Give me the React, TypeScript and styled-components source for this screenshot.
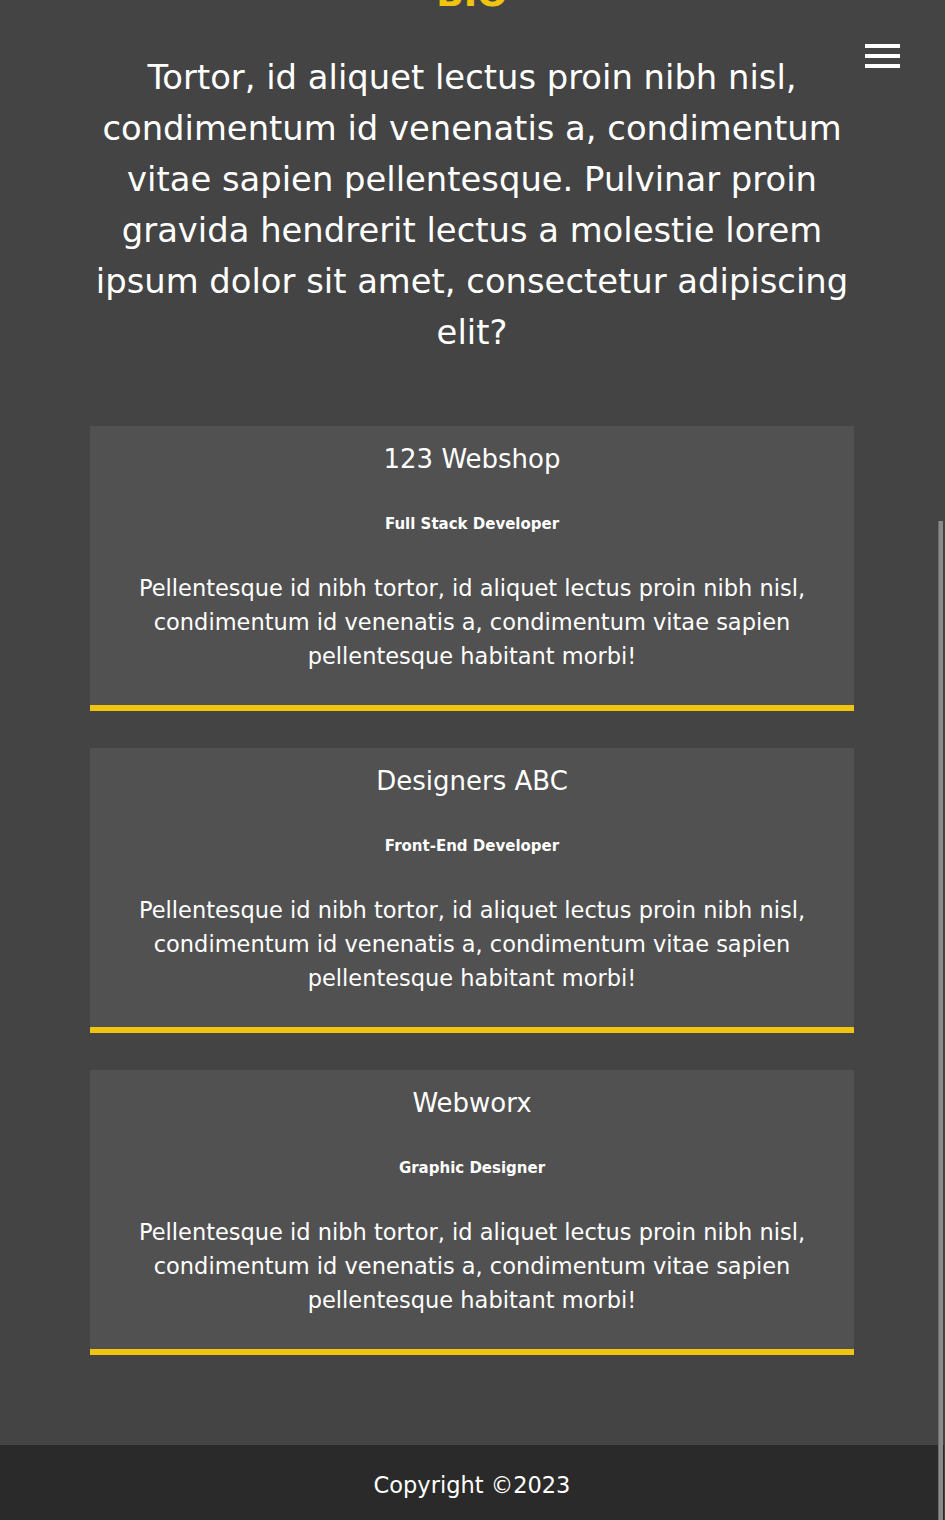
import React from 'react';
import styled, { createGlobalStyle } from 'styled-components';

const background = '#444444';
const card = '#515151';
const accent = '#f1c40f';
const footerBg = '#2a2a2a';

const GlobalStyles = createGlobalStyle`
  html, body {
    margin: 0;
    padding: 0;
  }
  body {
    background-color: ${background};
    color: #ffffff;
    font-family: "DejaVu Sans", Verdana, sans-serif;
    overflow: hidden;
  }
`;

const Page = styled('div')`
  width: 944px;
  min-height: 1520px;
  display: flex;
  flex-direction: column;
`;

const Menu = styled('button')`
  position: fixed;
  top: 44px;
  right: 45px;
  width: 35px;
  height: 24px;
  padding: 0;
  border: none;
  background: transparent;
  display: flex;
  flex-direction: column;
  justify-content: space-between;
  cursor: pointer;
`;

const MenuBar = styled('span')`
  display: block;
  height: 4px;
  background: #ffffff;
`;

const Scrollbar = styled('div')`
  position: fixed;
  top: 521px;
  bottom: 0;
  right: 2px;
  width: 4px;
  background: #8a8a8a;
  border-left: 1px solid #6c6c6c;
`;

const Main = styled('main')`
  flex: 1;
  width: 764px;
  margin: 0 auto;
  padding-bottom: 90px;
`;

const Heading = styled('h1')`
  margin: -26.5px 0 0;
  height: 40px;
  text-align: center;
  color: ${accent};
  font-size: 36px;
  font-weight: bold;
  line-height: 40px;
  text-transform: uppercase;
`;

const Intro = styled('p')`
  margin: 38px 0 68.5px;
  text-align: center;
  font-size: 33.8px;
  line-height: 51px;
`;

const CardList = styled('div')`
  display: flex;
  flex-direction: column;
  gap: 37px;
`;

const Job = styled('section')`
  background: ${card};
  border-bottom: 6px solid ${accent};
  padding: 17px 44px 31.75px;
  text-align: center;
`;

const Company = styled('h2')`
  margin: 0;
  font-size: 26px;
  font-weight: normal;
  line-height: 32px;
`;

const Role = styled('h3')`
  margin: 40px 0 0;
  font-size: 15px;
  font-weight: bold;
  line-height: 18px;
`;

const Description = styled('p')`
  margin: 39px 0 0;
  font-size: 22.5px;
  line-height: 33.75px;
`;

const Footer = styled('footer')`
  background: ${footerBg};
  height: 75px;
  padding-top: 4px;
  box-sizing: border-box;
  display: flex;
  align-items: center;
  justify-content: center;
  font-size: 22.5px;
`;

const jobs = [
  { company: '123 Webshop', role: 'Full Stack Developer' },
  { company: 'Designers ABC', role: 'Front-End Developer' },
  { company: 'Webworx', role: 'Graphic Designer' },
];

const text =
  'Pellentesque id nibh tortor, id aliquet lectus proin nibh nisl, condimentum id venenatis a, condimentum vitae sapien pellentesque habitant morbi!';

export default function App() {
  return (
    <>
      <GlobalStyles />
      <Page>
        <Menu aria-label="Menu">
          <MenuBar />
          <MenuBar />
          <MenuBar />
        </Menu>
        <Main>
          <Heading>Bio</Heading>
          <Intro>
            Tortor, id aliquet lectus proin nibh nisl, condimentum id venenatis a, condimentum
            vitae sapien pellentesque. Pulvinar proin gravida hendrerit lectus a molestie lorem
            ipsum dolor sit amet, consectetur adipiscing elit?
          </Intro>
          <CardList>
            {jobs.map((job) => (
              <Job key={job.company}>
                <Company>{job.company}</Company>
                <Role>{job.role}</Role>
                <Description>{text}</Description>
              </Job>
            ))}
          </CardList>
        </Main>
        <Footer>Copyright ©2023</Footer>
        <Scrollbar />
      </Page>
    </>
  );
}
